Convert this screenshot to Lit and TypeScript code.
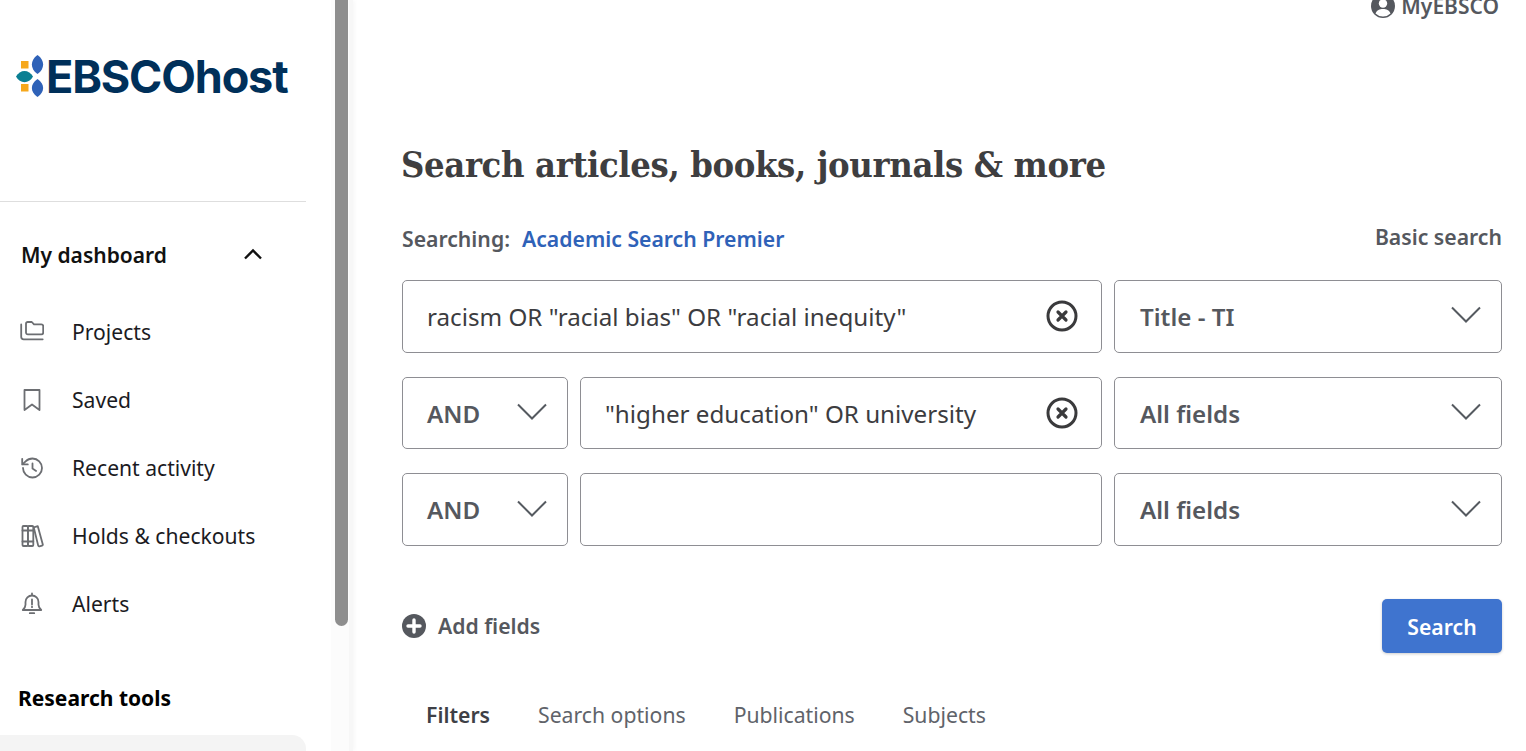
import { LitElement, html, css, svg } from "lit";
import { customElement } from "lit/decorators.js";

const chevron = html`<svg class="chev" viewBox="0 0 30 17" fill="none"><path d="M1 1.500 15 15.500 29 1.500" stroke="#555a60" stroke-width="2"/></svg>`;
const clear = html`<svg class="clear" viewBox="0 0 32 32" fill="none"><circle cx="16" cy="16" r="14" stroke="#3a3a3c" stroke-width="3"/><path d="M12 12l8 8M20 12l-8 8" stroke="#3a3a3c" stroke-width="3.200" stroke-linecap="round"/></svg>`;

const navIcons = {
  folder: svg`<path d="M6 4.500V3.700A1.700 1.700 0 0 1 7.700 2h4.100l2.200 2.400h7.300A1.900 1.900 0 0 1 23.200 6.300v6.200a1.900 1.900 0 0 1-1.900 1.900H7.900A1.900 1.900 0 0 1 6 12.500z"/><path d="M1.200 4.500v12.300a2.500 2.500 0 0 0 2.500 2.500h19"/>`,
  bookmark: svg`<path d="M4.500 2h15v20l-7.500-5.500-7.500 5.500z"/>`,
  history: svg`<path d="M3 12a9.500 9.500 0 1 0 9.500-9.500A9.800 9.800 0 0 0 5.600 5.400L2.700 8.200"/><path d="M2.200 2.800v5.600h5.600"/><path d="M12.500 7.500v5l3.600 2.400"/>`,
  books: svg`<rect x="2.500" y="2" width="5.400" height="20" rx="1"/><rect x="7.900" y="2" width="5.400" height="20" rx="1"/><path d="M2.500 6.500h10.800M2.500 17.500h10.800"/><path d="M13.700 3.300l4.100-1.100 5 18.200a1 1 0 0 1-.7 1.200l-2.700.7a1 1 0 0 1-1.200-.7z"/>`,
  bell: svg`<path d="M12 3.500a6.500 6.500 0 0 0-6.500 6.500v2.800c0 2-1 3.500-2.700 5.200h18.400c-1.700-1.700-2.700-3.200-2.700-5.200V10A6.500 6.500 0 0 0 12 3.500zM12 3.500V1.500"/><path d="M12 7.500v5M12 14.600v.6M9.800 21.200h4.400"/>`,
};

@customElement("app-root")
export class AppRoot extends LitElement {
  static styles = css`
    :host { display: block; font-family: "Noto Sans", "Open Sans", sans-serif; color: #55585e; background: #fff; }
    * { box-sizing: border-box; }
    .page { display: flex; height: 751px; overflow: hidden; }

    .side { width: 331px; flex: none; padding-top: 55px; }
    .logo { display: flex; align-items: center; height: 42px; padding-left: 16px; gap: 2px; }
    .logo svg { width: 28px; height: 42px; flex: none; }
    .wordmark { font-family: "Inter", sans-serif; font-weight: 700; font-size: 45px; letter-spacing: -1.150px; color: #00305a; line-height: 42px; padding-top: 1px; }
    .rule { height: 1px; width: 306px; background: #dedede; margin-top: 104px; }
    .dash { display: flex; align-items: center; justify-content: space-between; width: 242px; margin: 35px 0 0 21px; height: 36px; color: #111; font-size: 21px; font-weight: 600; }
    .dash svg { width: 20px; height: 12px; margin-bottom: 3px; }
    .nav { margin-top: 25px; }
    .nav-item { display: flex; align-items: center; height: 68px; padding-left: 20px; gap: 28px; color: #1b1b1f; font-size: 21.100px; }
    .nav-item svg { width: 24px; height: 24px; flex: none; fill: none; stroke: #6c6e72; stroke-width: 1.800; stroke-linecap: round; stroke-linejoin: round; }
    .nav-item span { margin-top: -2px; }
    .tools { margin: 45px 0 0 18px; height: 30px; line-height: 30px; font-size: 21px; font-weight: 700; color: #000; }
    .panel { width: 306px; height: 60px; margin-top: 22px; background: #f4f4f4; border-radius: 0 14px 0 0; }

    .rail { width: 22px; flex: none; padding-left: 4px; box-shadow: 2px 0 4px rgba(0,0,0,.03); background: linear-gradient(90deg, #fcfcfc 0 18px, #f7f7f7 18px); }
    .thumb { width: 13px; height: 626px; background: #8e8e8e; border-radius: 0 0 7px 7px; }

    .main { flex: 1; min-width: 0; padding: 0 24px 0 49px; }
    .top { display: flex; justify-content: flex-end; align-items: center; gap: 6px; height: 28px; margin-top: -8px; padding-right: 3px; font-size: 21px; font-weight: 600; color: #55585e; }
    .top svg { width: 24px; height: 24px; }
    h1 { margin: 116px 0 0 -1px; font-family: "DejaVu Serif", "Liberation Serif", serif; font-stretch: condensed; font-weight: 700; font-size: 36px; line-height: 56px; color: #3e3e40; letter-spacing: -0.36px; white-space: nowrap; }
    .scope { display: flex; justify-content: space-between; align-items: center; margin-top: 31px; height: 30px; font-size: 21.200px; font-weight: 600; }
    .scope .k { margin-right: 12px; }
    .scope a { color: #2f62b8; text-decoration: none; }
    .scope .basic { color: #55585e; margin-top: -3px; }
    .grid { display: grid; grid-template-columns: 166px 522px 388px; column-gap: 12px; row-gap: 24px; margin-top: 27px; grid-auto-rows: 72.700px; }
    .box { display: flex; align-items: center; justify-content: space-between; border: 1px solid #8e8e93; border-radius: 5px; padding: 0 20px 0 24px; font-size: 24.200px; min-width: 0; }
    .select { font-weight: 600; color: #55585e; padding-left: 25px; }
    .input { color: #3c3c40; padding-right: 23px; white-space: nowrap; }
    .wide { grid-column: 1 / 3; }
    .chev { width: 30px; height: 17px; flex: none; margin-top: -3px; }
    .select.small { padding-left: 24px; }
    .clear { width: 32px; height: 32px; flex: none; }
    .actions { display: flex; justify-content: space-between; align-items: center; margin-top: 53px; height: 54px; }
    .add { display: flex; align-items: center; gap: 12px; font-size: 21.200px; font-weight: 600; }
    .add svg { width: 24px; height: 24px; }
    .add span { margin-top: -2px; }
    .btn { width: 120px; height: 54px; border: 0; border-radius: 5px; background: #3f74cf; color: #fff; font: 600 21.200px "Noto Sans", sans-serif; box-shadow: 0 1px 3px rgba(0,0,0,.2); padding: 0; }
    .tabs { display: flex; gap: 48px; margin: 42px 0 0 24px; font-size: 21.200px; height: 40px; line-height: 40px; color: #60636a; }
    .tabs .on { font-weight: 600; color: #3e4046; }
  `;

  render() {
    const nav: [keyof typeof navIcons, string][] = [
      ["folder", "Projects"], ["bookmark", "Saved"], ["history", "Recent activity"], ["books", "Holds & checkouts"], ["bell", "Alerts"],
    ];
    return html`<div class="page">
      <aside class="side">
        <div class="logo">
          <svg viewBox="0 0 28 42">
            <rect x="5" y="6" width="7.500" height="7.500" fill="#f6a81c"/>
            <rect x="5" y="29" width="7.500" height="7.500" fill="#f6a81c"/>
            <path d="M0 21.500C4 14 13 14 17 21.500 13 29 4 29 0 21.500z" fill="#0a7f93"/>
            <path d="M21.500 0C29 5 29 14 21.500 19 14 14 14 5 21.500 0z" fill="#2f62b8"/>
            <path d="M21.500 24C29 29 29 37 21.500 42 14 37 14 29 21.500 24z" fill="#2f62b8"/>
          </svg>
          <span class="wordmark">EBSCOhost</span>
        </div>
        <div class="rule"></div>
        <div class="dash">My dashboard
          <svg viewBox="0 0 20 12" fill="none"><path d="M2 10.500l8-8 8 8" stroke="#111" stroke-width="2.400"/></svg>
        </div>
        <nav class="nav">
          ${nav.map(([i, t]) => html`<div class="nav-item"><svg viewBox="0 0 24 24">${navIcons[i]}</svg><span>${t}</span></div>`)}
        </nav>
        <div class="tools">Research tools</div>
        <div class="panel"></div>
      </aside>
      <div class="rail"><div class="thumb"></div></div>
      <main class="main">
        <div class="top">
          <svg viewBox="0 0 24 24"><circle cx="12" cy="12" r="12" fill="#55585e"/><circle cx="12" cy="9.500" r="4.200" fill="#fff"/><path d="M4.500 19.500c1.500-3.500 4-4.500 7.500-4.500s6 1 7.500 4.500A10.500 10.500 0 0 1 12 22.500a10.500 10.500 0 0 1-7.500-3z" fill="#fff"/></svg>
          MyEBSCO
        </div>
        <h1>Search articles, books, journals &amp; more</h1>
        <div class="scope">
          <div><span class="k">Searching:</span><a href="#">Academic Search Premier</a></div>
          <span class="basic">Basic search</span>
        </div>
        <div class="grid">
          <div class="box input wide">racism OR "racial bias" OR "racial inequity"${clear}</div>
          <div class="box select">Title - TI${chevron}</div>
          <div class="box select small">AND${chevron}</div>
          <div class="box input">"higher education" OR university${clear}</div>
          <div class="box select">All fields${chevron}</div>
          <div class="box select small">AND${chevron}</div>
          <div class="box input"></div>
          <div class="box select">All fields${chevron}</div>
        </div>
        <div class="actions">
          <div class="add">
            <svg viewBox="0 0 24 24"><circle cx="12" cy="12" r="12" fill="#55585e"/><path d="M12 6v12M6 12h12" stroke="#fff" stroke-width="3.400" stroke-linecap="round"/></svg>
            <span>Add fields</span>
          </div>
          <button class="btn">Search</button>
        </div>
        <div class="tabs">
          <span class="on">Filters</span><span>Search options</span><span>Publications</span><span>Subjects</span>
        </div>
      </main>
    </div>`;
  }
}
